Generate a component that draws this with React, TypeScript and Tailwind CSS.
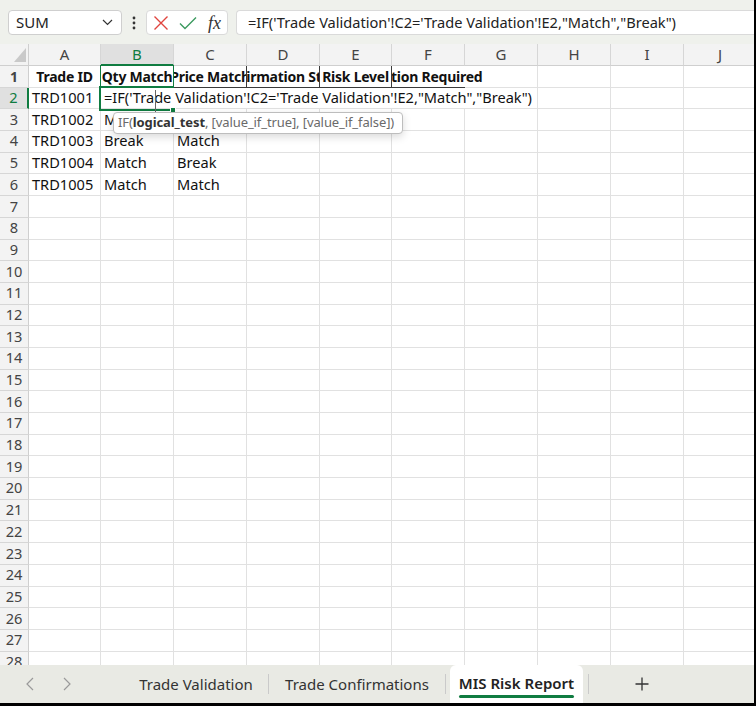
import React from "react";

const W = ["w-[72px]", "w-[73px]", "w-[73px]", "w-[73px]", "w-[72px]", "w-[73px]", "w-[73px]", "w-[73px]", "w-[73px]", "w-[73px]"];
const LET = ["A", "B", "C", "D", "E", "F", "G", "H", "I", "J"];
const FORMULA = `=IF('Trade Validation'!C2='Trade Validation'!E2,"Match","Break")`;

const DATA: Record<number, string[]> = {
  3: ["TRD1002", "Match", "Match"],
  4: ["TRD1003", "Break", "Match"],
  5: ["TRD1004", "Match", "Break"],
  6: ["TRD1005", "Match", "Match"],
};

function RowHead({ n }: { n: number }) {
  const sel = n === 2;
  return (
    <div
      className={
        sel
          ? "w-[29px] shrink-0 flex items-center justify-center border-b border-[#d6d6d6] border-r-2 border-r-[#107c41] bg-[#e0e0e0] text-[#107c41]"
          : "w-[29px] shrink-0 flex items-center justify-center border-b border-[#d6d6d6] border-r border-r-[#cfcfcf] bg-[#f3f3f3] text-[#444]"
      }
    >
      {n}
    </div>
  );
}

function ColHeader() {
  return (
    <div className="flex h-[22px] shrink-0 text-[15px]">
      <div className="relative w-[29px] shrink-0 border-r border-b border-[#cfcfcf] bg-[#f3f3f3]">
        <svg className="absolute right-[2px] bottom-[3px]" width="12" height="14" viewBox="0 0 12 14">
          <polygon points="12,0 12,14 0,14" fill="#c9c9c9" />
        </svg>
      </div>
      {LET.map((l, i) => (
        <div
          key={l}
          className={`${W[i]} shrink-0 flex items-center justify-center border-r border-r-[#d6d6d6] ${
            i === 1
              ? "bg-[#e0e0e0] text-[#107c41] border-b-2 border-b-[#107c41]"
              : "bg-[#f3f3f3] text-[#444] border-b border-b-[#cfcfcf]"
          }`}
        >
          {l}
        </div>
      ))}
    </div>
  );
}

function Row1() {
  return (
    <div className="flex h-[21.7px] shrink-0 text-[14px] font-bold tracking-[-0.25px] text-[#111]">
      <RowHead n={1} />
      <div className="w-[72px] shrink-0 flex items-center justify-center overflow-hidden whitespace-nowrap border-r border-b border-[#e1e1e1]">Trade ID</div>
      <div className="w-[73px] shrink-0 flex items-center justify-center overflow-hidden whitespace-nowrap border-r border-b border-[#3a3a3a]">Qty Match</div>
      <div className="w-[73px] shrink-0 flex items-center justify-center overflow-hidden whitespace-nowrap border-r border-b border-[#3a3a3a]">Price Match</div>
      <div className="w-[73px] shrink-0 flex items-center justify-center overflow-hidden whitespace-nowrap border-r border-b border-[#3a3a3a]">Confirmation Status</div>
      <div className="relative z-10 w-[72px] shrink-0 flex items-center justify-center overflow-hidden whitespace-nowrap border-r border-b border-[#3a3a3a] bg-white">Risk Level</div>
      <div className="w-[73px] shrink-0 flex items-center justify-center whitespace-nowrap border-b border-[#3a3a3a]">Action Required</div>
      {[6, 7, 8, 9].map((i) => (
        <div key={i} className={`${W[i]} shrink-0 border-r border-b border-[#e1e1e1]`} />
      ))}
    </div>
  );
}

function Row2() {
  return (
    <div className="flex h-[21.7px] shrink-0 text-[#111]">
      <RowHead n={2} />
      <div className="w-[72px] shrink-0 flex items-center pl-[3px] overflow-hidden whitespace-nowrap border-r border-b border-[#e1e1e1]">TRD1001</div>
      <div className="w-[437px] shrink-0 flex items-center pl-[3px] overflow-hidden whitespace-nowrap border-r border-b border-[#e1e1e1]">{FORMULA}</div>
      {[7, 8, 9].map((i) => (
        <div key={i} className={`${W[i]} shrink-0 border-r border-b border-[#e1e1e1]`} />
      ))}
    </div>
  );
}

function Row({ n }: { n: number }) {
  const d = DATA[n] || [];
  return (
    <div className="flex h-[21.7px] shrink-0 text-[#111]">
      <RowHead n={n} />
      {LET.map((l, i) => (
        <div
          key={l}
          className={`${W[i]} shrink-0 flex items-center pl-[3px] overflow-hidden whitespace-nowrap border-r border-b border-[#e1e1e1]`}
        >
          {d[i] || ""}
        </div>
      ))}
    </div>
  );
}

function TopBar() {
  return (
    <div className="flex h-[44px] shrink-0 items-start bg-[#eff1ec] pt-[10px] text-[14.6px] text-[#222]">
      <div className="ml-[8px] flex h-[25px] w-[114px] shrink-0 items-center justify-between rounded-[4px] border border-[#cfcfcf] bg-white pl-[7px] pr-[8px] text-[15px]">
        <span>SUM</span>
        <svg width="11" height="7" viewBox="0 0 11 7">
          <path d="M1 1 L5.5 5.5 L10 1" fill="none" stroke="#333" strokeWidth="1.2" />
        </svg>
      </div>
      <div className="flex h-[25px] w-[24px] shrink-0 items-center justify-center">
        <svg width="4" height="14" viewBox="0 0 4 14">
          <circle cx="2" cy="2" r="1.4" fill="#333" />
          <circle cx="2" cy="7" r="1.4" fill="#333" />
          <circle cx="2" cy="12" r="1.4" fill="#333" />
        </svg>
      </div>
      <div className="flex h-[25px] w-[82px] shrink-0 items-center rounded-[4px] border border-[#dadada] bg-white">
        <svg className="ml-[6px]" width="16" height="16" viewBox="0 0 16 16">
          <path d="M1.5 1.5 L14.5 14.5 M14.5 1.5 L1.5 14.5" stroke="#e0443e" strokeWidth="1.4" fill="none" />
        </svg>
        <svg className="ml-[10px]" width="18" height="14" viewBox="0 0 18 14">
          <path d="M1 7.5 L6 12.5 L17 1.5" stroke="#3c9a5f" strokeWidth="1.4" fill="none" />
        </svg>
        <span className="ml-[11px] font-['Liberation_Serif',serif] text-[18px] italic leading-none text-[#333]">fx</span>
      </div>
      <div className="ml-[8px] flex h-[25px] flex-1 items-center overflow-hidden whitespace-nowrap rounded-l-[4px] border border-r-0 border-[#dadada] bg-white pl-[11px]">
        {FORMULA}
      </div>
    </div>
  );
}

function TabBar() {
  return (
    <div className="flex h-[38px] shrink-0 items-center bg-[#e9eae4] text-[15px] text-[#333]">
      <div className="flex w-[124px] shrink-0 items-center">
        <svg className="ml-[26px]" width="8" height="14" viewBox="0 0 8 14">
          <path d="M7 1 L1 7 L7 13" fill="none" stroke="#9a9a9a" strokeWidth="1.2" />
        </svg>
        <svg className="ml-[29px]" width="8" height="14" viewBox="0 0 8 14">
          <path d="M1 1 L7 7 L1 13" fill="none" stroke="#9a9a9a" strokeWidth="1.2" />
        </svg>
      </div>
      <div className="flex w-[144px] shrink-0 justify-center whitespace-nowrap">Trade Validation</div>
      <div className="h-[20px] w-px shrink-0 bg-[#cacaca]" />
      <div className="flex w-[176px] shrink-0 justify-center whitespace-nowrap">Trade Confirmations</div>
      <div className="h-[20px] w-px shrink-0 bg-[#cacaca]" />
      <div className="w-[4px] shrink-0" />
      <div className="flex h-full w-[133px] shrink-0 flex-col items-center justify-center self-end rounded-t-[6px] bg-white pt-[2px]">
        <div className="flex flex-col items-stretch">
          <span className="whitespace-nowrap font-semibold text-[#222]">MIS Risk Report</span>
          <div className="mt-[1px] h-[3px] rounded-full bg-[#107c41]" />
        </div>
      </div>
      <div className="w-[5px] shrink-0" />
      <div className="h-[20px] w-px shrink-0 bg-[#cacaca]" />
      <div className="flex w-[106px] shrink-0 items-center justify-center">
        <svg width="14" height="14" viewBox="0 0 14 14">
          <path d="M7 0.5 V13.5 M0.5 7 H13.5" stroke="#333" strokeWidth="1.3" fill="none" />
        </svg>
      </div>
    </div>
  );
}

export default function App() {
  const rows = Array.from({ length: 22 }, (_, i) => i + 7);
  return (
    <div className="flex h-[706px] w-[756px] flex-col overflow-hidden border-r-2 border-b-[3px] border-black bg-white font-['Noto_Sans',sans-serif] text-[14.6px]">
      <TopBar />
      <div className="relative flex-1 overflow-hidden bg-white">
        <div className="flex w-[760px] flex-col">
          <ColHeader />
          <Row1 />
          <Row2 />
          {[3, 4, 5, 6].map((n) => (
            <Row key={n} n={n} />
          ))}
          {rows.map((n) => (
            <Row key={n} n={n} />
          ))}
        </div>
        {/* B1 highlight */}
        <div className="pointer-events-none absolute left-[100px] top-[21px] h-[23px] w-[74px] border border-[#107c41]" />
        {/* Active cell B2 (right edge hidden under the overflowing text) */}
        <div className="pointer-events-none absolute left-[99px] top-[42px] h-[25px] w-[74px] border-2 border-r-0 border-[#107c41]" />
        <div className="absolute left-[170px] top-[63px] h-[6px] w-[6px] border border-white bg-[#107c41]" />
        {/* caret */}
        <div className="absolute left-[155px] top-[46px] h-[22px] w-px bg-[#666]" />
        {/* tooltip */}
        <div className="absolute left-[113px] top-[68px] z-20 flex h-[22px] w-[290px] items-center whitespace-nowrap rounded-[4px] border border-[#bdbdbd] bg-white pl-[4px] text-[13px] tracking-[-0.1px] text-[#6a6a6a] shadow-[0_3px_8px_rgba(0,0,0,0.15)]">
          IF(<b className="font-bold text-[#333]">logical_test</b>, [value_if_true], [value_if_false])
        </div>
      </div>
      <TabBar />
    </div>
  );
}
